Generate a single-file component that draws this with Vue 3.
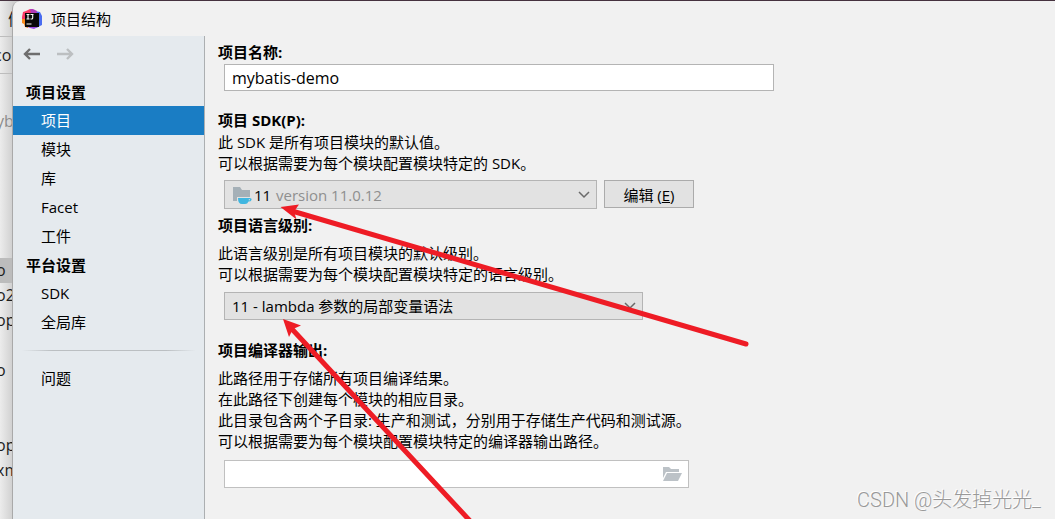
<script setup>
import { ref } from 'vue'

const projectName = ref('mybatis-demo')
const sdk = ref('11')
const level = ref('11')
const output = ref('')

const groups = [
  { title: '项目设置', items: ['项目', '模块', '库', 'Facet', '工件'] },
  { title: '平台设置', items: ['SDK', '全局库'] },
]
const active = ref('项目')
const treeRows = ['o', 'o2', 'op', '', 'o', '', '', 'op', 'xm', '']
</script>

<template>
  <div class="screen">
    <aside class="backdrop" aria-hidden="true">
      <div class="back-menu">们</div>
      <div class="back-crumb">cor</div>
      <div class="back-path">yb</div>
      <div
        v-for="(row, i) in treeRows"
        :key="i"
        class="back-row"
        :class="{ selected: i === 0 }"
      >{{ row }}</div>
    </aside>

    <section class="dialog" role="dialog" aria-labelledby="dialog-title">
      <header class="titlebar">
        <svg class="logo" viewBox="0 0 20 20" aria-hidden="true">
          <path d="M1 3 4 2 8 0l3 3-2 9H0V8z" fill="#fb3a66" />
          <path d="M0 10h6v9l-3-1-1-3-2-1z" fill="#f98a1c" />
          <path d="M13 2l5 1 2 4v9l-6 3-5-5z" fill="#4a6cf0" />
          <path d="M8 0h3l4 2-1 4-5-1z" fill="#b13bb8" />
          <path d="M3 17l6-3 7 4-4 2-4-1z" fill="#9a4be0" />
          <rect x="3" y="4" width="14" height="14" fill="#090909" />
          <path d="M4.500 5.500h3M6 5.500v4M4.500 10h3M8.500 5.500h3M10.700 5.500v3.500q0 1-1 1H8.500M4.500 15h5" fill="none" stroke="#fff" stroke-width="1.100" />
        </svg>
        <h1 id="dialog-title">项目结构</h1>
      </header>

      <div class="content">
        <nav class="sidebar">
          <div class="history">
            <button type="button" class="nav-btn" aria-label="后退">
              <svg viewBox="0 0 18 14"><path d="M17 7H2M7 2 2 7l5 5" /></svg>
            </button>
            <button type="button" class="nav-btn forward" aria-label="前进" disabled>
              <svg viewBox="0 0 18 14"><path d="M1 7h15M11 2l5 5-5 5" /></svg>
            </button>
          </div>
          <template v-for="group in groups" :key="group.title">
            <h2>{{ group.title }}</h2>
            <button
              v-for="item in group.items"
              :key="item"
              type="button"
              class="item"
              :class="{ active: item === active }"
              @click="active = item"
            >{{ item }}</button>
          </template>
          <hr />
          <button type="button" class="item">问题</button>
        </nav>

        <main class="form">
          <label class="caption" for="name">项目名称:</label>
          <input id="name" v-model="projectName" class="box name" type="text" />

          <label class="caption sdk-caption" for="sdk">项目 SDK(P):</label>
          <p class="tight">此 SDK 是所有项目模块的默认值。<br />可以根据需要为每个模块配置模块特定的 SDK。</p>
          <div class="sdk-row">
            <div class="select-wrap sdk-wrap">
              <select id="sdk" v-model="sdk" class="box">
                <option value="11">11</option>
              </select>
              <span class="adorn">
                <svg class="sdk-icon" viewBox="0 0 20 18" aria-hidden="true">
                  <path d="M1 1h7l2 3h8v7H5v4H1z" fill="#a5b0b7" />
                  <path d="M6 12h11.500q2.500 0 2 2-.5 1.500-3 1.500-1 2.500-3.500 2.500h-3Q6 18 6 12z" fill="#40b6e0" />
                  <path d="M16.800 13.200h1.200v1h-1.200z" fill="#e2e2e2" />
                </svg>
                <span class="version">version 11.0.12</span>
              </span>
              <svg class="chevron" viewBox="0 0 12 8" aria-hidden="true"><path d="M1 1l5 5 5-5" /></svg>
            </div>
            <button type="button" class="edit">编辑 (<u>E</u>)</button>
          </div>

          <label class="caption level-caption" for="level">项目语言级别:</label>
          <p class="spaced">此语言级别是所有项目模块的默认级别。<br />可以根据需要为每个模块配置模块特定的语言级别。</p>
          <div class="select-wrap level-wrap">
            <select id="level" v-model="level" class="box">
              <option value="11">11 - lambda 参数的局部变量语法</option>
            </select>
            <svg class="chevron" viewBox="0 0 12 8" aria-hidden="true"><path d="M1 1l5 5 5-5" /></svg>
          </div>

          <label class="caption output-caption" for="output">项目编译器输出:</label>
          <p class="spaced">此路径用于存储所有项目编译结果。<br />在此路径下创建每个模块的相应目录。<br />此目录包含两个子目录: 生产和测试，分别用于存储生产代码和测试源。<br />可以根据需要为每个模块配置模块特定的编译器输出路径。</p>
          <div class="output-wrap">
            <input id="output" v-model="output" type="text" />
            <button type="button" class="browse" aria-label="浏览">
              <svg viewBox="0 0 20 16">
                <path d="M1 1h6l2 2h8v3H4L1 12z" fill="#bcc2c7" />
                <path d="M5 7h15l-4 8H1z" fill="#bcc2c7" />
              </svg>
            </button>
          </div>
        </main>
      </div>
    </section>

    <svg class="arrows" width="800" height="519" viewBox="0 0 800 519" aria-hidden="true">
      <path d="M292 211 746 344M291 328 472 523" fill="none" stroke="#ee1c25" stroke-width="5" stroke-linecap="round" />
      <path d="M280.500 207 299 204.500l-5 7 2.500 8zM283 319l18 6.500-8 3.500-4 8z" fill="#ee1c25" />
    </svg>
    <div class="watermark">CSDN @头发掉光光_</div>
  </div>
</template>

<style>
body {
  margin: 0;
}
</style>

<style scoped>
.screen {
  position: relative;
  display: grid;
  grid-template-columns: 12px minmax(0, 1fr);
  box-sizing: border-box;
  height: 100vh;
  overflow: hidden;
  border-top: 1px solid #46323f;
  background: linear-gradient(90deg, #ececec, #cfcfcf 13px);
  font-family: "Open Sans", "Noto Sans CJK SC", sans-serif;
  font-size: 15px;
  color: #000;
}
button,
input,
select {
  font: inherit;
  color: inherit;
}
.backdrop {
  overflow: hidden;
  white-space: nowrap;
  font-size: 16px;
  color: #1c1c1c;
}
.back-menu {
  height: 35px;
  padding-left: 8px;
  border-bottom: 1px solid #bdbdbd;
  line-height: 36px;
}
.back-crumb {
  height: 36px;
  border-bottom: 1px solid #bdbdbd;
  line-height: 36px;
  text-indent: -6px;
}
.back-path {
  height: 184px;
  color: #8c8c8c;
  line-height: 94px;
  text-indent: -4px;
}
.back-row {
  height: 25px;
  line-height: 25px;
  text-indent: -4px;
}
.back-row.selected {
  background: #bcbcbc;
}
.dialog {
  display: flex;
  flex-direction: column;
  border-left: 1px solid #a9a9a9;
  border-top-left-radius: 8px;
  background: #f1f1f1;
  overflow: hidden;
}
.titlebar {
  display: flex;
  align-items: center;
  gap: 9px;
  height: 35px;
  flex: none;
  padding-left: 9px;
}
.logo {
  width: 20px;
  height: 20px;
}
h1 {
  margin: 0;
  font-size: 15px;
  font-weight: 400;
  line-height: 22px;
}
.content {
  display: grid;
  grid-template-columns: 192px minmax(0, 1fr);
  flex: 1;
}
.sidebar {
  display: flex;
  flex-direction: column;
  border-right: 1px solid #acafb1;
  background: #e5eaee;
}
.history {
  display: flex;
  gap: 15px;
  height: 36px;
  padding-bottom: 6px;
  padding-left: 10px;
}
.nav-btn {
  display: flex;
  align-items: center;
  padding: 0;
  border: 0;
  background: none;
}
.nav-btn svg {
  width: 18px;
  height: 14px;
  fill: none;
  stroke: #6e6e6e;
  stroke-width: 2.400;
}
.nav-btn.forward svg {
  stroke: #bcbfc1;
}
h2 {
  margin: 0;
  padding-left: 13px;
  font-size: 15px;
  font-weight: 700;
  line-height: 28px;
}
.item {
  height: 29px;
  padding: 0 0 0 28px;
  border: 0;
  background: none;
  line-height: 29px;
  text-align: left;
}
.item.active {
  background: #1a7dc4;
  color: #fff;
}
hr {
  width: 174px;
  height: 1px;
  margin: 13px auto;
  border: 0;
  background: linear-gradient(90deg, transparent, #bbbfc2 30px, #bbbfc2 144px, transparent);
}
.form {
  padding: 5px 20px 0 13px;
}
.caption {
  display: block;
  font-weight: 700;
  line-height: 22px;
}
.sdk-caption {
  margin-top: 18px;
}
.level-caption {
  margin-top: 5px;
}
.output-caption {
  margin-top: 19px;
}
p {
  margin: 0;
  line-height: 21px;
}
.tight {
  margin-top: 1px;
}
.spaced {
  margin-top: 7px;
}
.box {
  box-sizing: border-box;
  width: 100%;
  border: 1px solid #b4b4b4;
  border-radius: 0;
  outline: 0;
}
.name {
  display: block;
  max-width: 550px;
  height: 27px;
  margin: 1px 0 0 6px;
  padding: 0 7px;
  background: #fff;
  font-size: 16px;
}
.select-wrap {
  display: grid;
  align-items: center;
  width: 100%;
}
.select-wrap > * {
  grid-area: 1 / 1;
}
.select-wrap select {
  height: 28px;
  padding: 0 30px 0 7px;
  appearance: none;
  background: #e2e2e2;
}
.sdk-row {
  display: flex;
  gap: 7px;
  margin: 6px 0 0 6px;
}
.sdk-wrap {
  max-width: 373px;
}
.sdk-wrap select {
  height: 29px;
  padding-left: 29px;
}
.adorn {
  display: flex;
  align-items: center;
  gap: 24px;
  padding-left: 8px;
  color: #8f8f8f;
  pointer-events: none;
}
.sdk-icon {
  width: 20px;
  height: 18px;
}
.chevron {
  justify-self: end;
  width: 12px;
  height: 8px;
  margin-right: 7px;
  fill: none;
  stroke: #6a6a6a;
  stroke-width: 1.500;
  pointer-events: none;
}
.edit {
  width: 90px;
  height: 28px;
  padding: 0;
  border: 1px solid #ababab;
  background: #e2e2e2;
}
.level-wrap {
  max-width: 419px;
  margin: 7px 0 0 6px;
}
.output-wrap {
  display: flex;
  box-sizing: border-box;
  max-width: 465px;
  height: 28px;
  margin: 8px 0 0 6px;
  border: 1px solid #c0c0c0;
  background: #fff;
}
.output-wrap input {
  flex: 1;
  min-width: 0;
  padding: 0 7px;
  border: 0;
  outline: 0;
  background: none;
}
.browse {
  display: flex;
  align-items: center;
  padding: 0 6px;
  border: 0;
  background: none;
}
.browse svg {
  width: 20px;
  height: 16px;
}
.arrows {
  position: absolute;
  top: -1px;
  left: 0;
  pointer-events: none;
}
.watermark {
  position: absolute;
  right: 14px;
  bottom: 5px;
  font-family: Roboto, "Noto Sans CJK SC", sans-serif;
  font-size: 20px;
  font-weight: 300;
  line-height: 28px;
  color: #999;
  text-shadow: -1px -1px 0 #fff;
}
</style>
